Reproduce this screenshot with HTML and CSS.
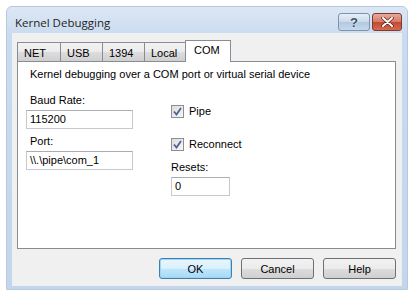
FILE: index.html
```html
<!DOCTYPE html>
<html lang="en">
<head>
  <meta charset="UTF-8" />
  <title>Kernel Debugging</title>
  <link rel="stylesheet" href="styles.css">
</head>
<body>

<div class="window">
  <div class="titlebar">
    <span class="title">Kernel Debugging</span>
    <div class="caption-buttons">
      <span class="cap-btn help-btn">?</span>
      <span class="cap-btn close-btn">
        <svg width="13" height="10" viewBox="0 0 13 10">
          <path d="M2 1 L11 9 M11 1 L2 9" stroke="#5a1f16" stroke-width="3.4" stroke-linecap="round"/>
          <path d="M2 1 L11 9 M11 1 L2 9" stroke="#ffffff" stroke-width="2" stroke-linecap="round"/>
        </svg>
      </span>
    </div>
  </div>

  <div class="client">
    <div class="tabs">
      <div class="tab tab-net">NET</div>
      <div class="tab tab-usb">USB</div>
      <div class="tab tab-1394">1394</div>
      <div class="tab tab-local">Local</div>
      <div class="tab tab-com active">COM</div>
    </div>

    <div class="panel">
      <p class="desc">Kernel debugging over a COM port or virtual serial device</p>

      <div class="fields">
        <div class="col col-left">
          <div class="label">Baud Rate:</div>
          <div class="textbox">115200</div>
          <div class="label label-port">Port:</div>
          <div class="textbox">\\.\pipe\com_1</div>
        </div>

        <div class="col col-right">
          <div class="check">
            <span class="box">
              <svg width="9" height="9" viewBox="0 0 9 9"><path d="M1 4.5 L3.5 7.5 L8 1" fill="none" stroke="#4c6490" stroke-width="1.8"/></svg>
            </span>
            Pipe
          </div>
          <div class="check check-reconnect">
            <span class="box">
              <svg width="9" height="9" viewBox="0 0 9 9"><path d="M1 4.5 L3.5 7.5 L8 1" fill="none" stroke="#4c6490" stroke-width="1.8"/></svg>
            </span>
            Reconnect
          </div>
          <div class="label label-resets">Resets:</div>
          <div class="textbox textbox-small">0</div>
        </div>
      </div>
    </div>

    <div class="buttons">
      <button class="btn btn-default">OK</button>
      <button class="btn">Cancel</button>
      <button class="btn">Help</button>
    </div>
  </div>
</div>

</body>
</html>
```

FILE: styles.css
```css
body {
  margin: 0;
  padding: 0;
  background: #ffffff;
  font-family: 'Liberation Sans', Arial, sans-serif;
  font-size: 11px;
  color: #000;
}

.window {
  margin: 6px;
  width: 402px;
  height: 284px;
  box-sizing: border-box;
  padding: 0 5px 4px 5px;
  background: linear-gradient(to bottom, #dce7f4 0px, #c9dbef 30px, #c3d6ec 100%);
  border: 1px solid #b7c9dd;
  border-radius: 6px 6px 0 0;
}

.titlebar {
  height: 26px;
  display: flex;
  align-items: flex-start;
  justify-content: space-between;
}

.title {
  font-family: 'Open Sans', 'Noto Sans', sans-serif;
  font-size: 11.5px;
  color: #1e1e1e;
  margin: 8px 0 0 3px;
}

.caption-buttons {
  display: flex;
  gap: 2px;
  margin-top: 6px;
}

.cap-btn {
  height: 16px;
  border-radius: 3px;
  display: flex;
  align-items: center;
  justify-content: center;
}

.help-btn {
  width: 30px;
  border: 1px solid #7d92ad;
  background: linear-gradient(to bottom, #e6eef7 0%, #c9d9ea 50%, #b3c8df 51%, #c6d8ec 100%);
  color: #3d4f6b;
  font-family: 'Liberation Sans', Arial, sans-serif;
  font-size: 13px;
  font-weight: bold;
  text-shadow: 0 0 2px #ffffff;
}

.close-btn {
  width: 28px;
  border: 1px solid #7e3b30;
  background: linear-gradient(to bottom, #e9a99b 0%, #d47866 50%, #c04a32 51%, #d66a4f 100%);
}

.client {
  background: #f0f0f0;
  height: 253px;
  box-sizing: border-box;
  padding: 7px 6px 8px 5px;
}

/* tabs */
.tabs {
  display: flex;
  align-items: flex-end;
  height: 21px;
  position: relative;
  z-index: 1;
}

.tab {
  height: 19px;
  box-sizing: border-box;
  border: 1px solid #898c95;
  border-bottom: none;
  background: linear-gradient(to bottom, #f3f3f3 0%, #ebebeb 50%, #dddddd 51%, #cfcfcf 100%);
  padding: 4px 0 0 6px;
  margin-left: -1px;
}

.tab-net { width: 44px; margin-left: 0; }
.tab-usb { width: 43px; }
.tab-1394 { width: 43px; }
.tab-local { width: 43px; }

.tab.active {
  width: 46px;
  height: 22px;
  margin-left: -2px;
  margin-bottom: -1px;
  background: #ffffff;
  padding: 3px 0 0 8px;
}

.panel {
  height: 188px;
  box-sizing: border-box;
  background: #ffffff;
  border: 1px solid #898c95;
  padding: 6px 12px 0 8px;
}

.desc {
  margin: 0 0 0 4px;
  line-height: 13px;
}

.fields {
  display: flex;
  gap: 38px;
  margin-top: 13px;
}

.col {
  display: flex;
  flex-direction: column;
}

.col-left {
  width: 107px;
}

.label {
  line-height: 13px;
  margin-left: 4px;
}

.label-port {
  margin-top: 6px;
}

.textbox {
  height: 19px;
  box-sizing: border-box;
  margin-top: 3px;
  border: 1px solid #c5c9d0;
  border-top-color: #abadb3;
  background: #ffffff;
  padding: 2px 0 0 3px;
  line-height: 13px;
}

.col-right {
  padding-top: 11px;
}

.check {
  display: flex;
  align-items: center;
  gap: 5px;
  line-height: 13px;
}

.check-reconnect {
  margin-top: 20px;
}

.box {
  width: 13px;
  height: 13px;
  box-sizing: border-box;
  border: 1px solid #8e8f8f;
  background: linear-gradient(to bottom right, #dcdcdc, #f6f6f6);
  display: flex;
  align-items: center;
  justify-content: center;
}

.label-resets {
  margin-left: 0;
  margin-top: 10px;
}

.textbox-small {
  width: 59px;
  margin-top: 3px;
}

/* bottom buttons */
.buttons {
  display: flex;
  justify-content: flex-end;
  gap: 9px;
  margin-top: 9px;
}

.btn {
  width: 73px;
  height: 21px;
  box-sizing: border-box;
  border: 1px solid #707070;
  border-radius: 3px;
  background: linear-gradient(to bottom, #f2f2f2 0%, #ebebeb 50%, #dddddd 51%, #cfcfcf 100%);
  font-family: 'Liberation Sans', Arial, sans-serif;
  font-size: 11px;
  color: #000;
  padding: 0;
}

.btn-default {
  border-color: #3c7fb1;
  background: linear-gradient(to bottom, #eaf6fd 0%, #d9f0fc 50%, #bee6fd 51%, #a7d9f5 100%);
  box-shadow: inset 0 0 0 1px #9fd5f2;
}
```
